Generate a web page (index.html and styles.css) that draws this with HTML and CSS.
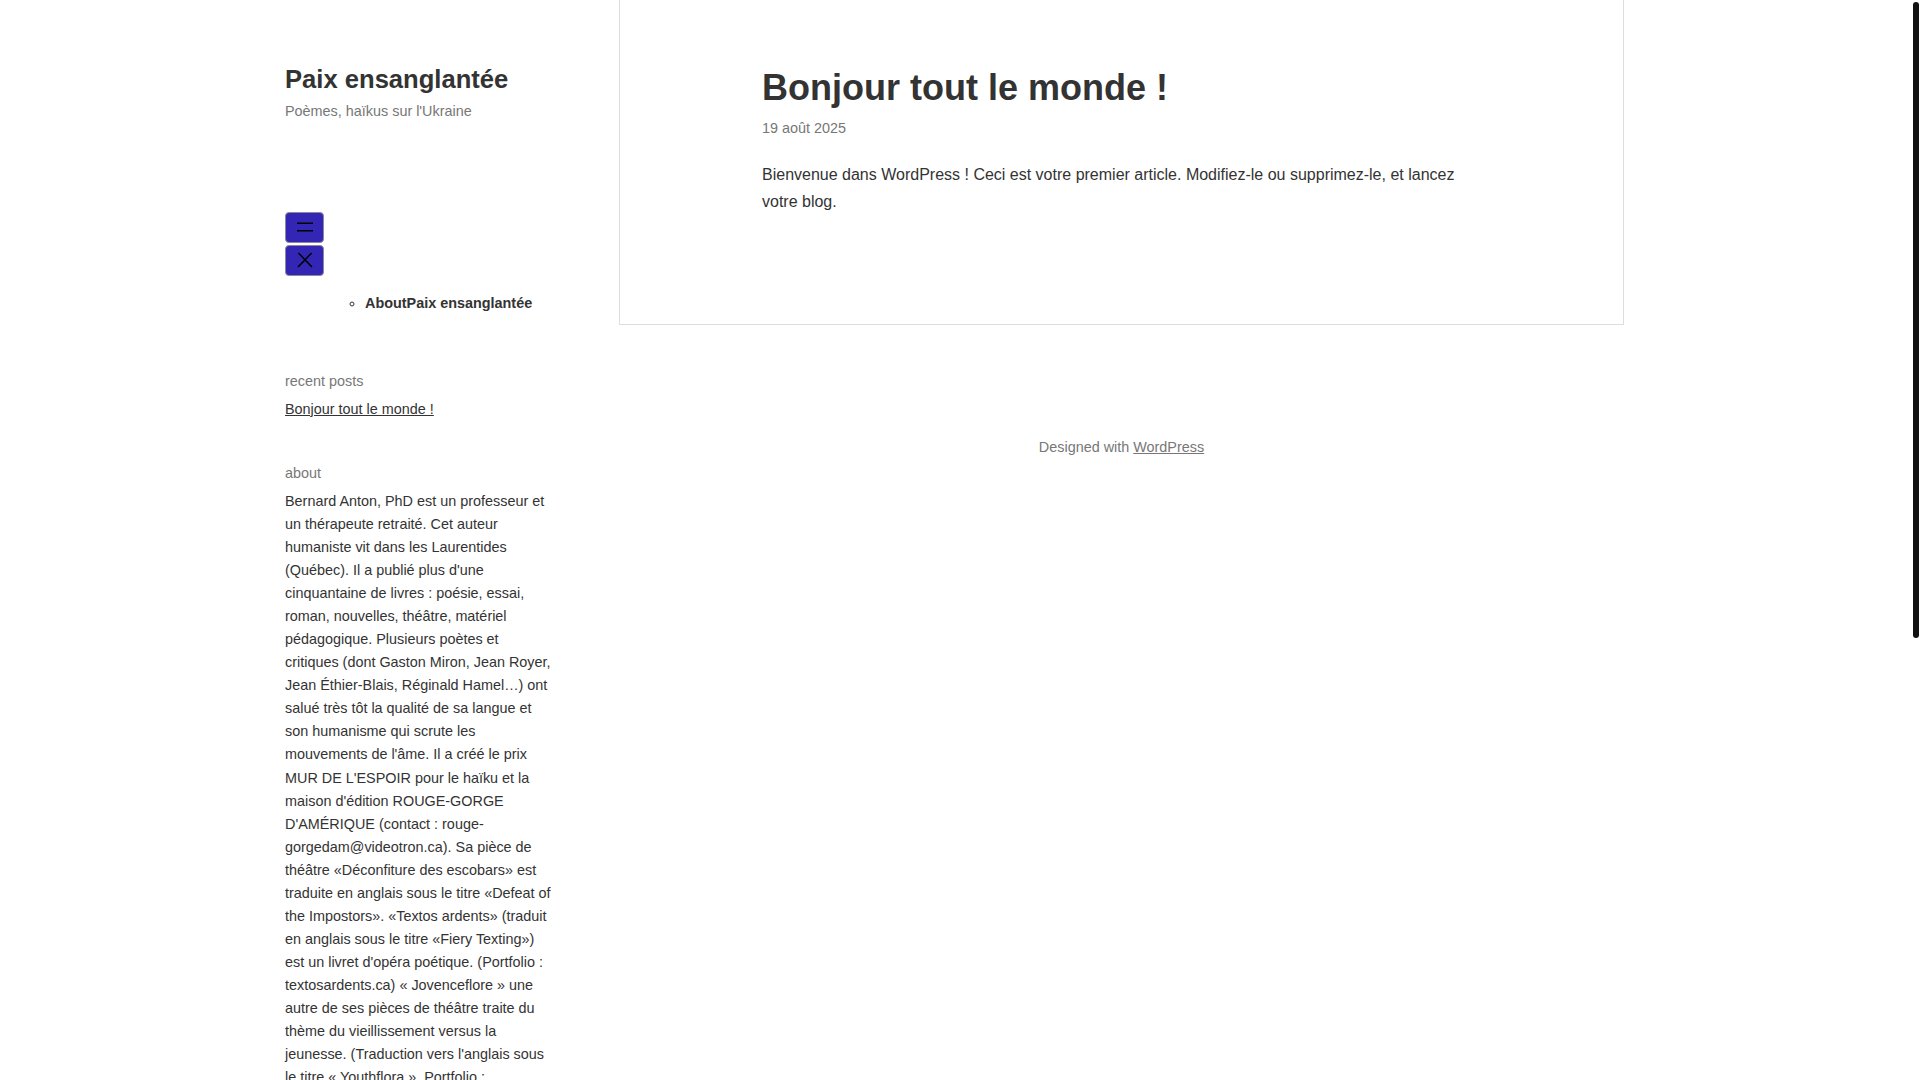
FILE: index.html
```html
<!DOCTYPE html>
<html lang="fr">
<head>
    <meta charset="UTF-8">
    <meta name="viewport" content="width=device-width, initial-scale=1.0">
    <title>Paix ensanglantée</title>
    <link rel="stylesheet" href="styles.css">
</head>
<body>
    <div class="site">
        <aside class="sidebar">
            <header class="site-header">
                <h1 class="site-title">Paix ensanglantée</h1>
                <p class="site-description">Poèmes, haïkus sur l'Ukraine</p>
            </header>

            <nav class="site-nav">
                <div class="nav-buttons">
                    <button class="nav-btn" aria-label="Ouvrir le menu">
                        <svg width="24" height="24" viewBox="0 0 24 24"><rect x="4" y="7.5" width="16" height="1.5"/><rect x="4" y="15" width="16" height="1.5"/></svg>
                    </button>
                    <button class="nav-btn" aria-label="Fermer le menu">
                        <svg width="24" height="24" viewBox="0 0 24 24"><path d="M13 11.8l6.1-6.3-1-1-6.1 6.2-6.1-6.2-1 1 6.1 6.3-6.5 6.7 1 1 6.5-6.6 6.5 6.6 1-1z"/></svg>
                    </button>
                </div>
                <ul class="menu">
                    <li>
                        <ul class="sub-menu">
                            <li><a href="#">About</a><a href="#">Paix ensanglantée</a></li>
                        </ul>
                    </li>
                </ul>
            </nav>

            <section class="widget">
                <h2 class="widget-title">recent posts</h2>
                <a class="widget-link" href="#">Bonjour tout le monde !</a>
            </section>

            <section class="widget">
                <h2 class="widget-title">about</h2>
                <p class="widget-text">Bernard Anton, PhD est un professeur et un thérapeute retraité. Cet auteur humaniste vit dans les Laurentides (Québec). Il a publié plus d'une cinquantaine de livres : poésie, essai, roman, nouvelles, théâtre, matériel pédagogique. Plusieurs poètes et critiques (dont Gaston Miron, Jean Royer, Jean Éthier-Blais, Réginald Hamel…) ont salué très tôt la qualité de sa langue et son humanisme qui scrute les mouvements de l'âme. Il a créé le prix MUR DE L'ESPOIR pour le haïku et la maison d'édition ROUGE-GORGE D'AMÉRIQUE (contact : rouge-gorgedam@videotron.ca). Sa pièce de théâtre «Déconfiture des escobars» est traduite en anglais sous le titre «Defeat of the Impostors». «Textos ardents» (traduit en anglais sous le titre «Fiery Texting») est un livret d'opéra poétique. (Portfolio : textosardents.ca) « Jovenceflore » une autre de ses pièces de théâtre traite du thème du vieillissement versus la jeunesse. (Traduction vers l'anglais sous le titre « Youthflora ». Portfolio : jovenceflore.ca)</p>
            </section>

            <section class="widget">
                <h2 class="widget-title">archives</h2>
                <a class="widget-link" href="#">août 2025</a>
            </section>

            <section class="widget">
                <h2 class="widget-title">categories</h2>
                <a class="widget-link" href="#">Non classé</a>
            </section>
        </aside>

        <main class="content">
            <article class="post">
                <h2 class="post-title">Bonjour tout le monde !</h2>
                <div class="post-date">19 août 2025</div>
                <p class="post-text">Bienvenue dans WordPress ! Ceci est votre premier article. Modifiez-le ou supprimez-le, et lancez votre blog.</p>
            </article>
            <footer class="site-footer">
                Designed with <a href="#">WordPress</a>
            </footer>
        </main>
    </div>
    <div class="scroll-thumb"></div>
</body>
</html>
```

FILE: styles.css
```css
body {
    margin: 0;
    padding: 0;
    font-family: "Liberation Sans", Arial, sans-serif;
    font-size: 16px;
    color: #333;
    background-color: #fff;
}

a {
    color: inherit;
}

/* overlay scrollbar thumb */
.scroll-thumb {
    position: fixed;
    top: 2px;
    right: 1px;
    width: 6px;
    height: 636px;
    border-radius: 3px;
    background-color: #111;
}

.site {
    display: grid;
    grid-template-columns: 266px 1005px;
    column-gap: 68px;
    margin-left: 285px;
}

/* sidebar */

.sidebar {
    padding-top: 64px;
    padding-bottom: 497px;
    font-size: 14.4px;
    line-height: 1.6;
}

.site-title {
    margin: 0 0 5px;
    font-size: 25.6px;
    line-height: 1.2;
    font-weight: bold;
    color: #333;
}

.site-description {
    margin: 0;
    color: #777;
}

.site-nav {
    margin-top: 89px;
}

.nav-buttons {
    display: flex;
    flex-direction: column;
    gap: 2px;
}

.nav-btn {
    display: flex;
    align-items: center;
    justify-content: center;
    width: 39px;
    height: 31px;
    padding: 0;
    border: 1px solid #8a8a9a;
    border-radius: 4px;
    background-color: #3326b4;
    color: #000;
}

.nav-btn svg {
    fill: #000;
}

.menu {
    list-style: none;
    margin: 16px 0 0;
    padding-left: 40px;
}

.sub-menu {
    list-style: circle;
    margin: 0;
    padding-left: 40px;
}

.sub-menu a {
    font-weight: bold;
    text-decoration: none;
    color: #333;
}

.widget {
    margin-top: 55px;
}

.widget + .widget {
    margin-top: 41px;
}

.widget-title {
    margin: 0 0 5px;
    font-size: 14.4px;
    font-weight: normal;
    color: #777;
}

.widget-link {
    color: #333;
}

.widget-text {
    margin: 0;
}

/* main column */

.post {
    border: 1px solid #ddd;
    border-top: none;
    padding: 66px 140px 109px 142px;
}

.post-title {
    margin: 0 0 8px;
    font-size: 36px;
    line-height: 1.2;
    font-weight: bold;
    color: #333;
}

.post-date {
    font-size: 14.4px;
    line-height: 1.6;
    color: #777;
}

.post-text {
    margin: 21px 0 0;
    font-size: 16px;
    line-height: 27px;
}

.site-footer {
    margin-top: 111px;
    text-align: center;
    font-size: 14.4px;
    line-height: 1.6;
    color: #777;
}
```
